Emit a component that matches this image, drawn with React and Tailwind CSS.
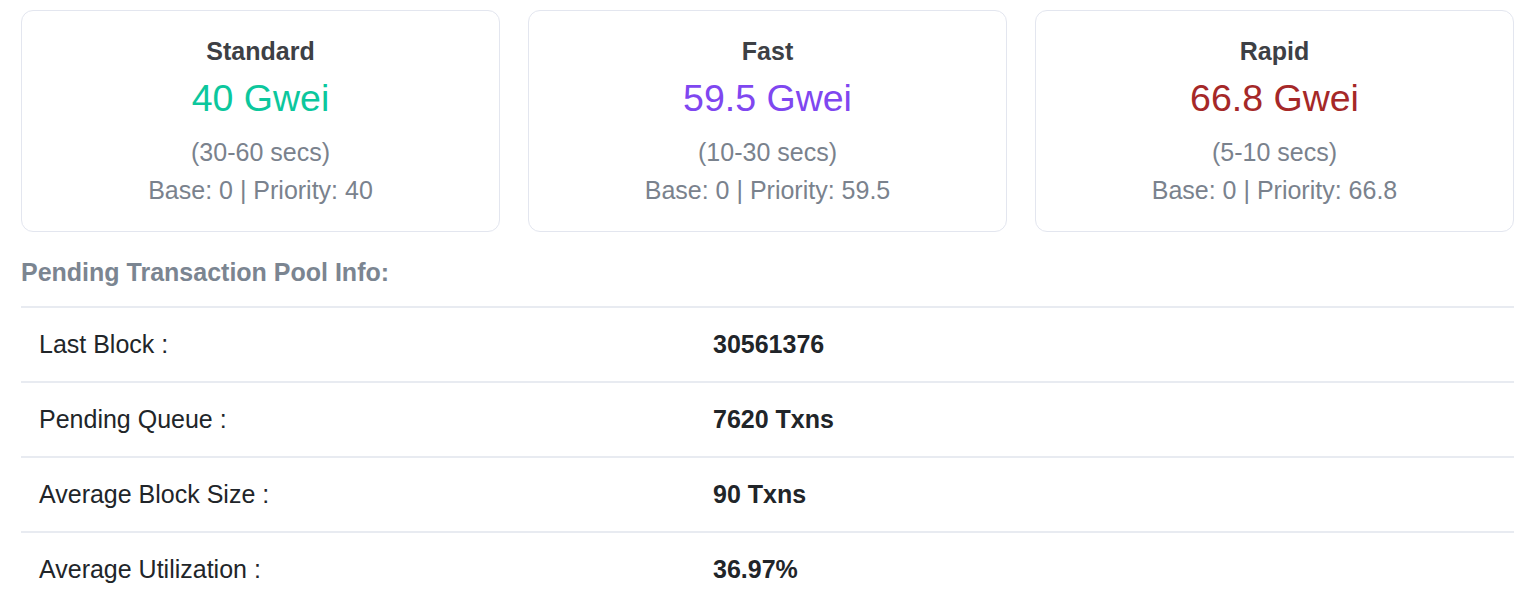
export default function App() {
  const cards = [
    { t: "Standard", g: "40 Gwei", c: "text-[#0cc79d]", s: "(30-60 secs)", b: "Base: 0 | Priority: 40" },
    { t: "Fast", g: "59.5 Gwei", c: "text-[#7f47f0]", s: "(10-30 secs)", b: "Base: 0 | Priority: 59.5" },
    { t: "Rapid", g: "66.8 Gwei", c: "text-[#a52828]", s: "(5-10 secs)", b: "Base: 0 | Priority: 66.8" },
  ];
  const rows = [
    ["Last Block :", "30561376"],
    ["Pending Queue :", "7620 Txns"],
    ["Average Block Size :", "90 Txns"],
    ["Average Utilization :", "36.97%"],
  ];
  return (
    <div className="bg-white pl-[21px] pr-[22px] pt-[10px] font-['Liberation_Sans',Arial,sans-serif] w-[1536px]">
      <div className="grid grid-cols-3 gap-[28px]">
        {cards.map((c) => (
          <div key={c.t} className="border border-[#e3e6ef] rounded-[12px] h-[222px] flex flex-col items-center pt-[22px]">
            <div className="text-[25px] leading-[37.5px] font-bold text-[#3d4045]">{c.t}</div>
            <div className={`text-[37.5px] leading-[45px] mt-[5px] ${c.c}`}>{c.g}</div>
            <div className="text-[25px] leading-[37.5px] text-[#7a828d] mt-[13px]">{c.s}</div>
            <div className="text-[25px] leading-[37.5px] text-[#7a828d] mt-[1px]">{c.b}</div>
          </div>
        ))}
      </div>
      <div className="text-[25px] leading-[37.5px] font-bold text-[#7b8591] mt-[22px]">Pending Transaction Pool Info:</div>
      <div className="mt-[14px]">
        {rows.map(([l, v]) => (
          <div key={l} className="grid grid-cols-[674px_1fr] border-t-[2px] border-[#e8ebf1] h-[75px] items-center pt-[2px] text-[25px] text-[#212529]">
            <div className="pl-[18px]">{l}</div>
            <div className="pl-[18px] font-bold">{v}</div>
          </div>
        ))}
      </div>
    </div>
  );
}
